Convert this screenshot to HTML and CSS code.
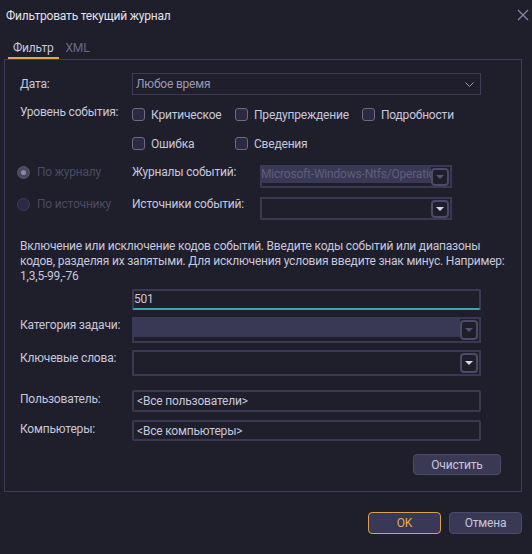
FILE: index.html
```html
<!DOCTYPE html>
<html lang="ru">
<head>
    <meta charset="UTF-8">
    <meta name="viewport" content="width=device-width, initial-scale=1.0">
    <title>Фильтровать текущий журнал</title>
    <link rel="stylesheet" href="styles.css">
</head>
<body>
    <div class="dialog">
        <header class="titlebar">
            <span class="title">Фильтровать текущий журнал</span>
            <svg class="close" width="12" height="12" viewBox="0 0 12 12">
                <path d="M1 1L11 11M11 1L1 11" stroke="#8886a6" stroke-width="1.3" fill="none"/>
            </svg>
        </header>

        <nav class="tabs">
            <span class="tab tab-active">Фильтр</span>
            <span class="tab">XML</span>
        </nav>

        <section class="panel">
            <div class="row row-date">
                <span class="label">Дата:</span>
                <div class="select">
                    <span>Любое время</span>
                    <svg width="9" height="5" viewBox="0 0 9 5"><path d="M0.5 0.5L4.5 4.5L8.5 0.5" stroke="#9a99b6" fill="none"/></svg>
                </div>
            </div>

            <div class="row row-level">
                <span class="label">Уровень события:</span>
                <div class="checks">
                    <label class="check"><span class="box"></span>Критическое</label>
                    <label class="check"><span class="box"></span>Предупреждение</label>
                    <label class="check"><span class="box"></span>Подробности</label>
                    <label class="check"><span class="box"></span>Ошибка</label>
                    <label class="check"><span class="box"></span>Сведения</label>
                </div>
            </div>

            <div class="sources">
                <label class="radio radio-on"><span class="dot"></span>По журналу</label>
                <span class="label">Журналы событий:</span>
                <div class="combo combo-off">
                    <span class="combo-text">Microsoft-Windows-Ntfs/Operational</span>
                    <span class="drop"></span>
                </div>

                <label class="radio"><span class="dot"></span>По источнику</label>
                <span class="label">Источники событий:</span>
                <div class="combo">
                    <span class="combo-text"></span>
                    <span class="drop"></span>
                </div>
            </div>

            <p class="hint">Включение или исключение кодов событий. Введите коды событий или диапазоны<br>кодов, разделяя их запятыми. Для исключения условия введите знак минус. Например:<br>1,3,5-99,-76</p>

            <div class="row">
                <span class="label"></span>
                <div class="field field-codes">501</div>
            </div>

            <div class="row row-top">
                <span class="label">Категория задачи:</span>
                <div class="combo combo-tall combo-off">
                    <span class="combo-text"></span>
                    <span class="drop"></span>
                </div>
            </div>

            <div class="row row-top row-keywords">
                <span class="label">Ключевые слова:</span>
                <div class="combo combo-tall">
                    <span class="combo-text"></span>
                    <span class="drop"></span>
                </div>
            </div>

            <div class="row row-top row-user">
                <span class="label">Пользователь:</span>
                <div class="field">&lt;Все пользователи&gt;</div>
            </div>

            <div class="row row-top row-computer">
                <span class="label">Компьютеры:</span>
                <div class="field">&lt;Все компьютеры&gt;</div>
            </div>

            <div class="panel-actions">
                <button class="btn btn-clear">Очистить</button>
            </div>
        </section>

        <footer class="actions">
            <button class="btn btn-ok">OK</button>
            <button class="btn">Отмена</button>
        </footer>
    </div>
</body>
</html>
```

FILE: styles.css
```css
body {
    margin: 0;
    background-color: #1e1f2b;
    color: #c8c7de;
    font-family: Roboto, "Noto Sans", sans-serif;
    font-size: 12px;
    line-height: 16px;
    letter-spacing: -0.2px;
}
.dialog {
    width: 532px;
    height: 554px;
}
.titlebar {
    height: 32px;
    display: flex;
    align-items: center;
    justify-content: space-between;
    padding: 0 3px 0 6px;
}
.title {
    color: #e2e2ee;
}
.close {
    margin-top: -2px;
}
.tabs {
    display: flex;
    padding: 8px 0 0 8px;
    height: 19px;
}
.tab {
    padding: 0 5px;
    margin-right: 2px;
    color: #6a6a86;
}
.tab-active {
    color: #c8c7de;
    border-bottom: 2px solid #e0a850;
}
.panel {
    margin: 0 10px 0 4px;
    border: 1px solid #3d3c58;
    padding: 0 20px 16px 15px;
}
.row {
    display: flex;
    align-items: center;
}
.row-top {
    align-items: flex-start;
    margin-top: 7px;
}
.label {
    flex: 0 0 112px;
}
.row-date {
    margin-top: 13px;
}
.select {
    flex: 0 0 338px;
    height: 20px;
    border: 1px solid #3d3c58;
    display: flex;
    align-items: center;
    justify-content: space-between;
    padding: 0 6px 0 3px;
    color: #9a99b6;
}
.row-level {
    align-items: flex-start;
    margin-top: 5px;
}
.row-level .label {
    padding-top: 4px;
}
.checks {
    display: grid;
    grid-template-columns: 103px 127px auto;
    grid-auto-rows: 29px;
}
.check {
    display: flex;
    align-items: center;
    gap: 6px;
}
.box {
    width: 11px;
    height: 11px;
    border: 1px solid #6a6988;
    border-radius: 3px;
    background-color: #2a2a42;
}
.sources {
    display: grid;
    grid-template-columns: 115px 128px 192px;
    grid-auto-rows: 23px;
    row-gap: 9px;
    margin: 7px 0 0 -3px;
    align-items: start;
}
.sources .label {
    line-height: 15px;
}
.radio {
    display: flex;
    align-items: center;
    gap: 7px;
    color: #4b4a62;
    line-height: 15px;
}
.dot {
    width: 11px;
    height: 11px;
    border-radius: 50%;
    border: 1px solid #3d3c58;
    background-color: #2a2a42;
    position: relative;
}
.radio-on .dot {
    background-color: #4a4960;
    border-color: #55546c;
}
.radio-on .dot::after {
    content: "";
    position: absolute;
    left: 3px;
    top: 3px;
    width: 5px;
    height: 5px;
    border-radius: 50%;
    background-color: #8a89a2;
}
.combo {
    height: 23px;
    box-sizing: border-box;
    border: 2px solid #3a3954;
    display: flex;
    overflow: hidden;
}
.combo-text {
    flex: 1;
    min-width: 0;
    white-space: nowrap;
    overflow: hidden;
    padding-left: 1px;
    margin: -2px 0 0 -2px;
    line-height: 19px;
}
.combo-off .combo-text {
    background-color: #3a3955;
    color: #5e5d7c;
    height: 18px;
}
.drop {
    flex: 0 0 18px;
    height: 18px;
    box-sizing: border-box;
    border: 2px solid #4b4a68;
    border-radius: 4px;
    background-color: #1e1f2b;
    margin: 1px 1px 0 0;
    display: flex;
    align-items: center;
    justify-content: center;
}
.drop::after {
    content: "";
    border-left: 4px solid transparent;
    border-right: 4px solid transparent;
    border-top: 4px solid #d6d5ee;
}
.combo-off .drop::after {
    border-top-color: #545370;
}
.combo-tall {
    flex: 0 0 349px;
    height: 26px;
}
.combo-tall .drop {
    height: 20px;
}
.combo-tall.combo-off .combo-text {
    height: 20px;
}
.hint {
    margin: 19px 0 0;
    line-height: 15px;
    white-space: nowrap;
}
.field {
    flex: 0 0 349px;
    height: 22px;
    box-sizing: border-box;
    border: 2px solid #3a3954;
    border-radius: 2px;
    padding-left: 3px;
    line-height: 18px;
}
.field-codes {
    margin-top: 5px;
    height: 21px;
    padding-left: 0;
    border-bottom-color: #3aa6b0;
    line-height: 17px;
}
.row-keywords {
    margin-top: 7px;
}
.row-user {
    margin-top: 14px;
}
.row-user .label,
.row-computer .label {
    padding-top: 1px;
}
.row-computer {
    margin-top: 8px;
}
.row-computer .field {
    height: 21px;
}
.panel-actions {
    display: flex;
    justify-content: flex-end;
    margin-top: 13px;
}
.btn {
    font: inherit;
    letter-spacing: inherit;
    color: #c8c7de;
    background-color: #3a3955;
    border: 1px solid #4b4a68;
    border-radius: 4px;
    height: 22px;
    width: 73px;
    padding: 0;
    cursor: pointer;
}
.btn-clear {
    width: 88px;
    height: 21px;
}
.btn-ok {
    color: #e0a850;
    border-color: #d8a050;
}
.actions {
    display: flex;
    justify-content: flex-end;
    gap: 8px;
    padding: 20px 10px 0 0;
}
```
